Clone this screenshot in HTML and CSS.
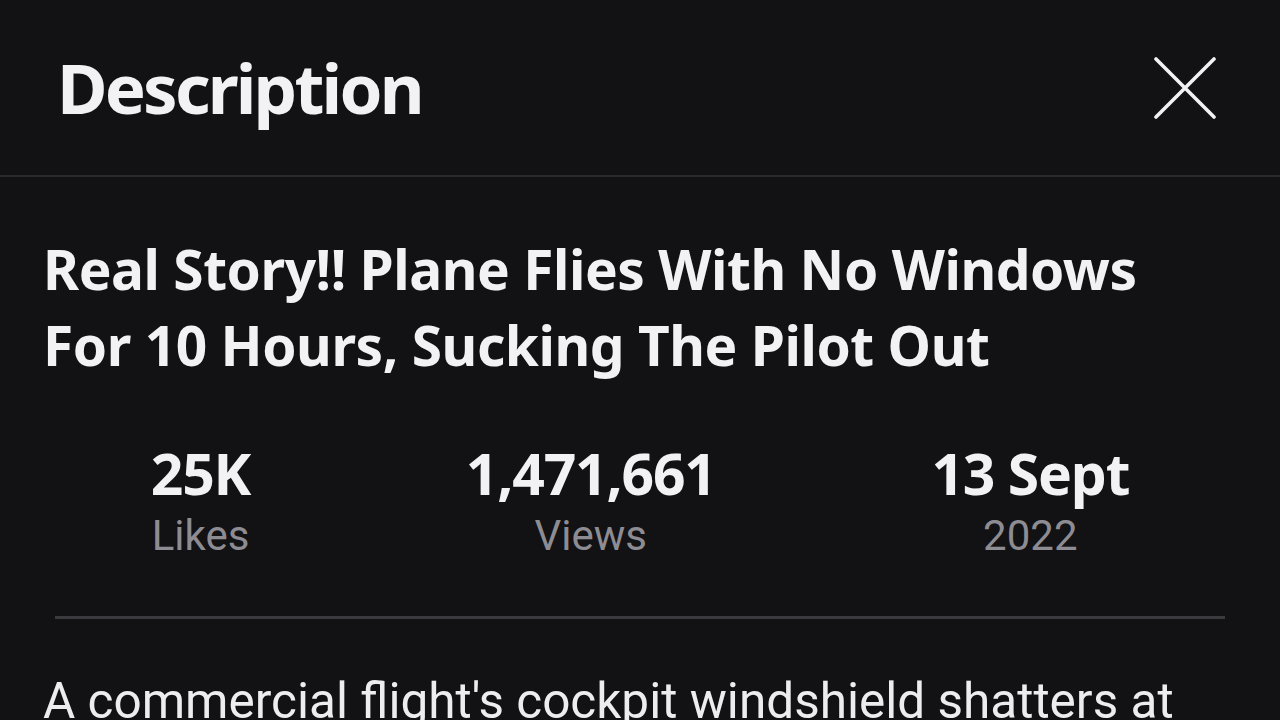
FILE: index.html
```html
<!DOCTYPE html>
<html lang="en">
<head>
<meta charset="utf-8">
<title>Description</title>
<link rel="stylesheet" href="styles.css">
</head>
<body>
<div class="sheet">
  <header class="sheet-header">
    <h1 class="sheet-title">Description</h1>
    <button class="close-btn" aria-label="Close">
      <svg width="62" height="62" viewBox="0 0 62 62" aria-hidden="true">
        <path d="M2 2 L60 60 M60 2 L2 60" stroke="#f2f2f4" stroke-width="3.6" stroke-linecap="round" fill="none"/>
      </svg>
    </button>
  </header>
  <section class="video-info">
    <h2 class="video-title">Real Story!! Plane Flies With No Windows For 10 Hours, Sucking The Pilot Out</h2>
    <div class="stats">
      <div class="stat">
        <div class="stat-value">25K</div>
        <div class="stat-label">Likes</div>
      </div>
      <div class="stat">
        <div class="stat-value">1,471,661</div>
        <div class="stat-label">Views</div>
      </div>
      <div class="stat">
        <div class="stat-value">13 Sept</div>
        <div class="stat-label">2022</div>
      </div>
    </div>
    <hr class="divider">
    <p class="video-desc">A commercial flight's cockpit windshield shatters at 17,000 feet, and the captain is partially sucked out of the plane while the crew fights to land safely.</p>
  </section>
</div>
</body>
</html>
```
FILE: styles.css
```css
html, body {
  margin: 0;
  padding: 0;
  background: #121114;
  overflow: hidden;
}
body {
  width: 1280px;
  height: 720px;
  color: #f2f2f4;
  font-family: "Noto Sans", "DejaVu Sans", sans-serif;
}
.sheet {
  display: flex;
  flex-direction: column;
  height: 720px;
  overflow: hidden;
}
.sheet-header {
  flex: none;
  height: 175px;
  display: flex;
  align-items: center;
  justify-content: space-between;
  padding: 0 64px 0 57px;
  border-bottom: 2px solid #2a292d;
}
.sheet-title {
  margin: 0;
  font-size: 69px;
  font-weight: 700;
  letter-spacing: -2.8px;
  line-height: 1;
  color: #f2f2f4;
}
.close-btn {
  background: none;
  border: 0;
  padding: 0;
  width: 62px;
  height: 62px;
  display: flex;
}
.video-info {
  padding: 54px 43px 0;
}
.video-title {
  margin: 0;
  max-width: 1130px;
  font-size: 55px;
  font-weight: 700;
  line-height: 76px;
  letter-spacing: -0.45px;
  color: #f2f2f4;
}
.stats {
  display: flex;
  justify-content: space-around;
  margin-top: 56px;
}
.stat {
  display: flex;
  flex-direction: column;
  align-items: center;
}
.stat-value {
  font-size: 57px;
  font-weight: 700;
  line-height: 68px;
  letter-spacing: -1.2px;
  color: #f2f2f4;
}
.stat-label {
  margin-top: 3px;
  font-family: Roboto, "Liberation Sans", sans-serif;
  font-size: 42px;
  line-height: 52px;
  color: #8d8c92;
}
.divider {
  margin: 54px 12px 0;
  border: 0;
  height: 3px;
  background: #3a393d;
}
.video-desc {
  margin: 54px 0 0;
  font-family: Roboto, "Liberation Sans", sans-serif;
  font-size: 49.5px;
  line-height: 56px;
  color: #ededf0;
}
```
